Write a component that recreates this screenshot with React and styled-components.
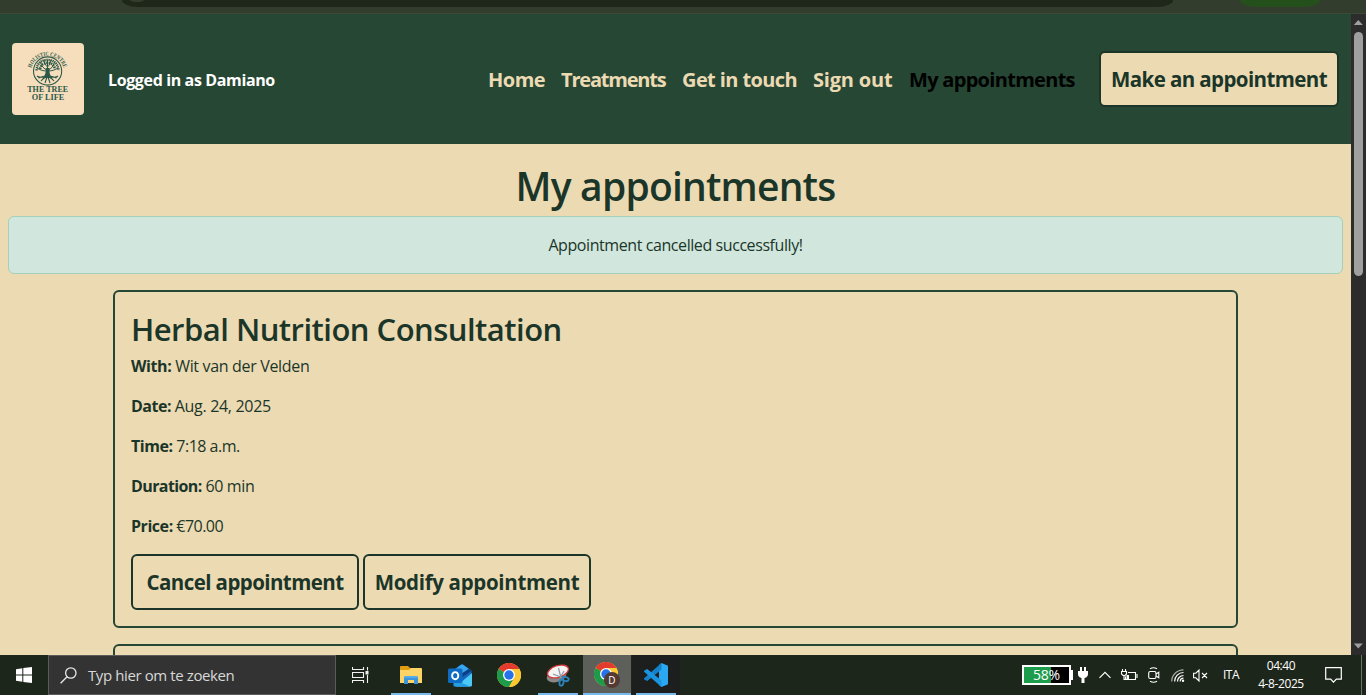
import React from 'react';
import styled, { createGlobalStyle } from 'styled-components';

const GlobalStyle = createGlobalStyle`
  * { box-sizing: border-box; }
  html, body { margin: 0; padding: 0; overflow: hidden; }
  body {
    font-family: "Open Sans", "Noto Sans", sans-serif;
    font-size: 16px;
    line-height: 24px;
    color: #1b3629;
    background: #ecdab3;
  }
  svg { display: block; flex: none; }
`;

const Screen = styled.div`
  width: 1366px;
  height: 695px;
  display: flex;
  flex-direction: column;
  overflow: hidden;
`;

/* Browser chrome */
const BrowserStrip = styled.div`
  flex: none;
  height: 14px;
  background: #333d2d;
  border-bottom: 1px solid #3b4a37;
  display: flex;
  align-items: flex-start;
  padding-left: 122px;
`;
const AddressBar = styled.div`
  width: 1051px;
  height: 7px;
  background: #1e2719;
  border-radius: 0 0 16px 16px / 0 0 7px 7px;
  padding-left: 8px;
`;
const SiteInfo = styled.div`
  width: 14px;
  height: 2px;
  background: #333d2d;
  border-radius: 0 0 7px 7px / 0 0 2px 2px;
`;
const ProfileChip = styled.div`
  margin-left: 67px;
  width: 80px;
  height: 7px;
  background: #24501c;
  border-radius: 0 0 16px 16px / 0 0 7px 7px;
`;
const Viewport = styled.div`
  flex: none;
  height: 641px;
  display: flex;
  overflow: hidden;
`;
const Page = styled.div`
  width: 1351px;
  height: 641px;
  overflow: hidden;
`;
const Scrollbar = styled.div`
  width: 15px;
  background: #2c2c2c;
  display: flex;
  flex-direction: column;
  align-items: center;
`;
const Thumb = styled.div`
  width: 9px;
  height: 244px;
  margin: 5px 0 auto;
  border-radius: 5px;
  background: #9f9f9f;
`;

/* Site header */
const Header = styled.header`
  height: 130px;
  background: #264734;
  display: flex;
  align-items: center;
  padding: 0 12px;
`;
const Brand = styled.div`
  width: 72px;
  height: 72px;
  border-radius: 4px;
  background: #f6debd;
  overflow: hidden;
`;
const LoggedIn = styled.span`
  margin-left: 24px;
  padding-top: 1px;
  color: #fff;
  font-weight: 700;
  letter-spacing: ${(p) => p.$track}px;
  white-space: nowrap;
`;
const Nav = styled.nav`
  margin-left: auto;
  padding-top: 2px;
  display: flex;
  gap: 16px;
`;
const NavLink = styled.a`
  width: ${(p) => p.$w}px;
  color: ${(p) => (p.$active ? '#000' : '#ecdab3')};
  font-size: 20px;
  line-height: 30px;
  font-weight: 700;
  letter-spacing: ${(p) => p.$track}px;
  white-space: nowrap;
`;
const Button = styled.a`
  display: flex;
  align-items: center;
  justify-content: center;
  width: ${(p) => p.$w}px;
  height: ${(p) => p.$h}px;
  border: 2px solid #1b3629;
  border-radius: 6px;
  background: #ecdab3;
  color: #1b3629;
  font-size: 20.5px;
  font-weight: 700;
  letter-spacing: ${(p) => p.$track}px;
  white-space: nowrap;
`;
const HeaderAction = styled.div`
  margin-left: 23px;
`;

/* Page body */
const Title = styled.h1`
  margin: 0 0 6px;
  padding-top: 18px;
  font-size: 39px;
  line-height: 48px;
  font-weight: 600;
  letter-spacing: ${(p) => p.$track}px;
  text-align: center;
`;
const Alert = styled.div`
  margin: 0 8px 16px;
  height: 58px;
  display: flex;
  align-items: center;
  justify-content: center;
  background: #d1e7dd;
  border: 1px solid #a3cfbb;
  border-radius: 6px;
  letter-spacing: ${(p) => p.$track}px;
`;
const Card = styled.article`
  width: 1125px;
  height: 338px;
  margin: 0 auto 16px;
  padding: 16px;
  border: 2px solid #264734;
  border-radius: 6px;
`;
const CardTitle = styled.h2`
  margin: 0 0 6px;
  padding-top: 2px;
  font-size: 31px;
  line-height: 38px;
  font-weight: 600;
  letter-spacing: ${(p) => p.$track}px;
`;
const Field = styled.p`
  margin: 0 0 16px;
  letter-spacing: ${(p) => p.$track}px;
  b { letter-spacing: ${(p) => p.$bold}px; }
`;
const Actions = styled.div`
  display: flex;
  gap: 4px;
`;

/* Taskbar */
const Taskbar = styled.footer`
  flex: none;
  height: 40px;
  background: #1d261a;
  display: flex;
  color: #fff;
`;
const TaskButton = styled.div`
  width: 48px;
  height: 40px;
  margin-right: ${(p) => p.$gap || 0}px;
  background: ${(p) => p.$bg || 'transparent'};
  display: flex;
  flex-direction: column;
  align-items: center;
  justify-content: space-between;
`;
const Glyph = styled.div`
  height: 38px;
  display: flex;
  align-items: center;
  padding-top: 2px;
`;
const Running = styled.div`
  width: ${(p) => p.$w}px;
  height: 2px;
  background: #76b9ed;
`;
const Search = styled.div`
  width: 288px;
  height: 40px;
  border: 1px solid #5b5b5b;
  background: #333;
  display: flex;
  align-items: center;
  padding-left: 11px;
  gap: 11px;
  font-size: 15px;
  letter-spacing: ${(p) => p.$track}px;
  color: #d8d8d8;
`;
const Tray = styled.div`
  margin-left: auto;
  width: 344px;
  display: flex;
  align-items: center;
  font-size: 12px;
`;
const Slot = styled.div`
  width: ${(p) => p.$w}px;
  flex: none;
  display: flex;
  justify-content: flex-start;
`;
const Battery = styled.div`
  width: 49px;
  height: 20px;
  border: 2px solid #fff;
  background: linear-gradient(90deg, #1d9c4c 60%, #000 60%);
  display: flex;
  align-items: center;
  justify-content: center;
  font-size: 14px;
  letter-spacing: -0.2px;
`;
const BatteryTip = styled.div`
  width: 2px;
  height: 10px;
  margin-top: 5px;
  background: #fff;
`;
const Language = styled.span`
  letter-spacing: -0.5px;
`;
const Clock = styled.div`
  width: 60px;
  margin-right: 14px;
  text-align: center;
  line-height: 18px;
  letter-spacing: -0.4px;
`;
const ShowDesktop = styled.div`
  margin-left: auto;
  width: 5px;
  height: 40px;
  border-left: 1px solid #6b7068;
`;

const Tree = () => (
  <svg width="72" height="72" viewBox="0 0 72 72" fill="none" stroke="#2c5849">
    <defs>
      <path id="arc" d="M19.500 24.500 A16.800 16.800 0 0 1 51.500 24.500" />
    </defs>
    <text fontFamily="Liberation Serif, serif" fontWeight="700" fontSize="6" fill="#2c5849" stroke="none" textAnchor="middle">
      <textPath href="#arc" startOffset="50%" textLength="43" lengthAdjust="spacingAndGlyphs">HOLISTIC CENTRE</textPath>
    </text>
    <circle cx="35.600" cy="28" r="14.100" strokeWidth="1.100" />
    <path d="M33.800 25h3.600c0 5 .3 7 3 10h-9.600c2.600-3 3-5 3-10Z" fill="#2c5849" stroke="none" />
    <path d="M35.500 30V17M35.500 27c-4-1-6-4-7-8M35.500 27c4-1 6-4 7-8M35 28c-4 0-7-1-10-3M36 28c4 0 7-1 10-3M35.500 24c-2-2-3-4-3.500-7M35.500 24c2-2 3-4 3.500-7" strokeWidth="1" />
    <path d="M24.500 27.500c.5-8 5.500-10.500 11-10.500s10.500 2.500 11 10.500" strokeWidth="2.400" strokeDasharray="1.300 .7" />
    <path d="M28 26c1-4.500 4-6 7.500-6s6.500 1.500 7.500 6" strokeWidth="2.600" strokeDasharray="1.500 .8" />
    <path d="M35.500 33c-3 0-6 .5-9 2M35.500 33c3 0 6 .5 9 2M34 34c-2 1-3.500 2-5 4M37 34c2 1 3.500 2 5 4M35 34l-2 6M36 34l2 6M32 34c-3 0-5 1-7-1M39 34c3 0 5 1 7-1" strokeWidth="1.100" />
    <g fontFamily="Liberation Serif, serif" fontWeight="700" fontSize="9" fill="#2c5849" stroke="none" textAnchor="middle">
      <text x="35.700" y="48.800" textLength="41" lengthAdjust="spacingAndGlyphs">THE TREE</text>
      <text x="36" y="57.200" textLength="32.500" lengthAdjust="spacingAndGlyphs">OF LIFE</text>
    </g>
  </svg>
);

const Windows = () => (
  <svg width="16" height="16" viewBox="0 0 16 16" fill="#fff">
    <path d="M0 2.200 6.300 1.300V7.500H0zM7.300 1.100 16 0V7.500H7.300zM0 8.500H6.300V14.700L0 13.800zM7.300 8.500H16V16L7.300 14.900z" />
  </svg>
);

const Magnifier = () => (
  <svg width="17" height="17" viewBox="0 0 17 17" fill="none" stroke="#e8e8e8" strokeWidth="1.300">
    <circle cx="10.800" cy="6" r="5.200" />
    <path d="M7.100 9.800.6 16.300" />
  </svg>
);

const TaskView = () => (
  <svg width="17" height="16" viewBox="0 0 17 16" fill="none" stroke="#f2f2f2" strokeWidth="1.100">
    <path d="M.5 0v2.500h11V0M.5 16v-2.500h11V16M.5 5.500h11v5H.5zM15.500 0v3.500M15.500 8v8" />
    <path d="M13.500 4h3v3.500h-3z" fill="#f2f2f2" stroke="none" />
  </svg>
);

const Explorer = () => (
  <svg width="22" height="19" viewBox="0 0 22 19">
    <path d="M0 1Q0 0 1 0h7l2 2v4H0z" fill="#e09d12" />
    <path d="M0 4h9l1.500-2H21q1 0 1 1v14H0z" fill="#ffd466" />
    <path d="M4 18v-6q0-2 2-2h10q2 0 2 2v6h-4v-4H8v4z" fill="#3c94da" />
    <path d="M4 12q0-2 2-2h10q2 0 2 2z" fill="#55abe6" />
  </svg>
);

const Outlook = () => (
  <svg width="24" height="23" viewBox="0 0 24 23">
    <path d="M5 6.500 13 .5q1-.7 2 0l8.500 6V21q0 1.500-1.500 1.500H6.500Q5 22.500 5 21z" fill="#1766bd" />
    <path d="M7 5.200 13 .8q1-.7 2 0l5.500 4L12 11z" fill="#3aa6ee" />
    <path d="M12 10.500 21 5l2.500 2-9 6z" fill="#0d3f86" />
    <path d="M24 8v13q0 1.500-1.500 1.500H8L24 9z" fill="#4cc9f5" />
    <path d="M6 15.500 22 22.500H7Q6 22.500 6 21z" fill="#249ee0" />
    <rect y="4.500" width="14.500" height="14.500" rx="1.500" fill="#0f6cc4" />
    <ellipse cx="7.200" cy="11.700" rx="3.100" ry="3.600" fill="none" stroke="#fff" strokeWidth="1.900" />
  </svg>
);

const ChromeRings = () => (
  <>
    <circle cx="12" cy="12" r="12" fill="#fcc934" />
    <path d="M12 12 1.600 6A12 12 0 0 1 22.400 6z" fill="#e33b2e" />
    <path d="M1.600 6A12 12 0 0 0 12 24L17.200 15 12 12z" fill="#1e9a4b" />
    <path d="M12 6h10.400A12 12 0 0 1 12 24l5.200-9z" fill="#fcc934" />
    <circle cx="12" cy="12" r="6" fill="#fff" />
    <circle cx="12" cy="12" r="4.700" fill="#2672e8" />
  </>
);

const Chrome = () => (
  <svg width="24" height="24" viewBox="0 0 24 24">
    <ChromeRings />
  </svg>
);

const ChromeProfile = () => (
  <svg width="26" height="26" viewBox="0 0 26 26">
    <ChromeRings />
    <circle cx="18" cy="18" r="8" fill="#543a33" />
    <text x="18" y="21.800" fontSize="10" fill="#fff" textAnchor="middle" fontFamily="Open Sans, sans-serif">D</text>
  </svg>
);

const Snip = () => (
  <svg width="24" height="23" viewBox="0 0 24 23">
    <ellipse cx="10.500" cy="12.500" rx="10" ry="5.500" transform="rotate(-15 10.500 12.500)" fill="#8a8785" />
    <ellipse cx="12" cy="7.500" rx="10.800" ry="5.800" transform="rotate(-18 12 7.500)" fill="#f4f4f4" stroke="#d13c3c" strokeWidth="1.300" />
    <path d="M12.500 4 15 14M7 10l10 4M18 7l-4 7" stroke="#8c98a3" strokeWidth="1.200" />
    <g fill="none" stroke="#2b83bd" strokeWidth="1.900">
      <ellipse cx="19.500" cy="15" rx="3.200" ry="2" transform="rotate(15 19.500 15)" />
      <ellipse cx="15.500" cy="18.500" rx="2" ry="3.200" transform="rotate(12 15.500 18.500)" />
    </g>
  </svg>
);

const VSCode = () => (
  <svg width="24" height="24" viewBox="0 0 24 24">
    <path d="M17.500 0 24 2.800V21.200L17.500 24 15 22V2z" fill="#2aa8f2" />
    <path d="M17.500 0v6.500L3.200 18 .4 16.600q-.8-.8 0-1.600z" fill="#1581ca" />
    <path d="M17.500 24v-6.500L3.200 6 .4 7.400q-.8.800 0 1.600z" fill="#1b94df" />
  </svg>
);

const Plug = () => (
  <svg width="10" height="16" viewBox="0 0 10 16" fill="#fff">
    <path d="M2 0h2v4h2V0h2v4h2v3q0 3-3.500 4v5h-3v-5Q0 10 0 7V4h2z" />
  </svg>
);

const Chevron = () => (
  <svg width="12" height="8" viewBox="0 0 12 8" fill="none" stroke="#fff" strokeWidth="1.200">
    <path d="M.5 6.800 6 1.300l5.500 5.500" />
  </svg>
);

const Charging = () => (
  <svg width="17" height="13" viewBox="0 0 17 13" fill="none" stroke="#fff" strokeWidth="1.100">
    <path d="M7 3.500h7.500v7h-10v-3M15.500 5.500h.5v3h-.5M1.500 0v2.500M4.500 0v2.500M.5 2.500h5V5L4 6.500H2L.5 5zM3 6.500v4h1.500" />
    <path d="M5.500 6H8v4H5.500z" fill="#fff" stroke="none" />
  </svg>
);

const MeetNow = () => (
  <svg width="12" height="16" viewBox="0 0 12 16" fill="none" stroke="#fff" strokeWidth="1.100">
    <rect x=".7" y="4.500" width="7.300" height="7" rx="1.500" />
    <path d="M8 7l2.800-1.800v5.600L8 9M2 1.700Q5.500-.3 9 1.700M2 14.300q3.500 2 7 0" />
  </svg>
);

const Wifi = () => (
  <svg width="14" height="13" viewBox="0 0 14 13" fill="none" strokeWidth="1.200">
    <path d="M.7 12.500C.7 6 6 .8 12.500.8" stroke="#a5aaa2" />
    <path d="M3.600 12.500c0-5 4-9 8.900-9M6.500 12.500c0-3.300 2.700-6 6-6M9.200 12.500c0-2 1.500-3.300 3.300-3.300" stroke="#fff" />
    <circle cx="12" cy="11.700" r="1.200" fill="#fff" />
  </svg>
);

const Muted = () => (
  <svg width="15" height="13" viewBox="0 0 15 13" fill="none" stroke="#fff" strokeWidth="1.100">
    <path d="M.6 4.200h2.200L6 1v11L2.800 8.800H.6zM9 4l5 5M14 4 9 9" />
  </svg>
);

const Notification = () => (
  <svg width="17" height="16" viewBox="0 0 17 16" fill="none" stroke="#fff" strokeWidth="1.200">
    <path d="M.7.7h15.600v11.500h-5l-2.800 3-2.800-3h-5z" />
  </svg>
);

const Arrow = ({ down }) => (
  <svg width="15" height="13" viewBox="0 0 15 13" fill="#9f9f9f">
    {down ? <path d="M2.800 1.500h9L7.300 6.500z" /> : <path d="M2.800 11h9L7.300 6z" />}
  </svg>
);

const links = [
  { text: 'Home', w: 57, track: -0.5 },
  { text: 'Treatments', w: 105, track: -1.2 },
  { text: 'Get in touch', w: 115, track: -0.6 },
  { text: 'Sign out', w: 80, track: -0.2 },
  { text: 'My appointments', w: 167, track: -0.7, active: true },
];

const fields = [
  { label: 'With:', value: 'Wit van der Velden', track: -0.33, bold: -0.4 },
  { label: 'Date:', value: 'Aug. 24, 2025', track: -0.32, bold: -0.5 },
  { label: 'Time:', value: '7:18 a.m.', track: -0.5, bold: -0.45 },
  { label: 'Duration:', value: '60 min', track: -0.38, bold: -0.6 },
  { label: 'Price:', value: '€70.00', track: -0.55, bold: -0.45 },
];

export default function App() {
  return (
    <Screen>
      <GlobalStyle />
      <BrowserStrip>
        <AddressBar><SiteInfo /></AddressBar>
        <ProfileChip />
      </BrowserStrip>
      <Viewport>
        <Page>
          <Header>
            <Brand><Tree /></Brand>
            <LoggedIn $track={-0.37}>Logged in as Damiano</LoggedIn>
            <Nav>
              {links.map((l) => (
                <NavLink key={l.text} $w={l.w} $track={l.track} $active={l.active}>{l.text}</NavLink>
              ))}
            </Nav>
            <HeaderAction>
              <Button $w={240} $h={56} $track={-0.6}>Make an appointment</Button>
            </HeaderAction>
          </Header>
          <main>
            <Title $track={-0.8}>My appointments</Title>
            <Alert $track={-0.42}>Appointment cancelled successfully!</Alert>
            <Card>
              <CardTitle $track={-0.52}>Herbal Nutrition Consultation</CardTitle>
              {fields.map((f) => (
                <Field key={f.label} $track={f.track} $bold={f.bold}><b>{f.label}</b> {f.value}</Field>
              ))}
              <Actions>
                <Button $w={228} $h={56} $track={-0.58}>Cancel appointment</Button>
                <Button $w={228} $h={56} $track={-0.33}>Modify appointment</Button>
              </Actions>
            </Card>
            <Card />
          </main>
        </Page>
        <Scrollbar>
          <Arrow />
          <Thumb />
          <Arrow down />
        </Scrollbar>
      </Viewport>
      <Taskbar>
        <TaskButton><Glyph><Windows /></Glyph></TaskButton>
        <Search $track={-0.4}><Magnifier />Typ hier om te zoeken</Search>
        <TaskButton $gap={3}><Glyph><TaskView /></Glyph></TaskButton>
        <TaskButton $gap={1}><Glyph><Explorer /></Glyph><Running $w={40} /></TaskButton>
        <TaskButton $gap={1}><Glyph><Outlook /></Glyph></TaskButton>
        <TaskButton $gap={1}><Glyph><Chrome /></Glyph></TaskButton>
        <TaskButton $gap={1}><Glyph><Snip /></Glyph><Running $w={40} /></TaskButton>
        <TaskButton $gap={1} $bg="#5d5f5b"><Glyph><ChromeProfile /></Glyph><Running $w={48} /></TaskButton>
        <TaskButton $bg="#1d1f1e"><Glyph><VSCode /></Glyph><Running $w={40} /></TaskButton>
        <Tray>
          <Slot $w={56}><Battery>58%</Battery><BatteryTip /></Slot>
          <Slot $w={21}><Plug /></Slot>
          <Slot $w={22}><Chevron /></Slot>
          <Slot $w={27}><Charging /></Slot>
          <Slot $w={23}><MeetNow /></Slot>
          <Slot $w={22}><Wifi /></Slot>
          <Slot $w={30}><Muted /></Slot>
          <Slot $w={28}><Language>ITA</Language></Slot>
          <Clock>04:40<br />4-8-2025</Clock>
          <Notification />
          <ShowDesktop />
        </Tray>
      </Taskbar>
    </Screen>
  );
}
